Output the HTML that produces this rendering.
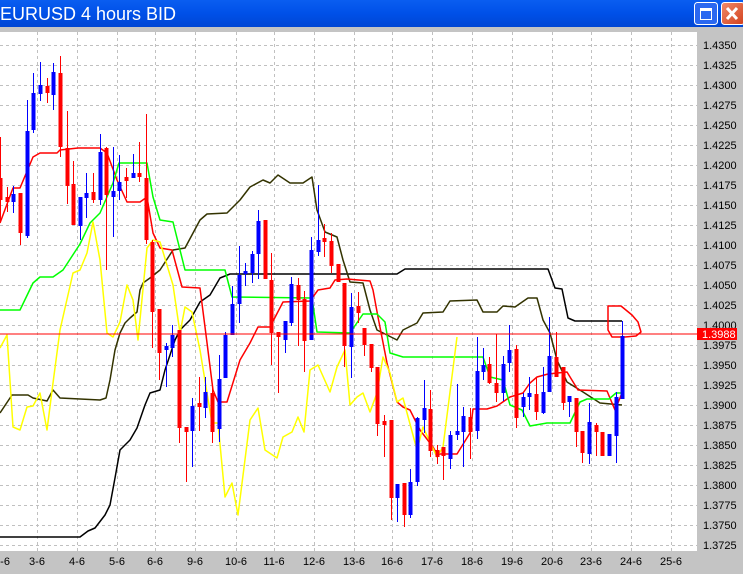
<!DOCTYPE html>
<html><head><meta charset="utf-8"><style>
html,body{margin:0;padding:0;width:743px;height:574px;overflow:hidden;background:#c4c4c4}
svg{display:block}
text{font-family:"Liberation Sans",sans-serif}
</style></head><body>
<svg width="743" height="574" viewBox="0 0 743 574" xmlns="http://www.w3.org/2000/svg">
<defs>
<linearGradient id="tb" x1="0" y1="0" x2="0" y2="1"><stop offset="0" stop-color="#0a5ef0"/><stop offset="0.5" stop-color="#0050e8"/><stop offset="1" stop-color="#0046d4"/></linearGradient>
<linearGradient id="cb" x1="0" y1="0" x2="1" y2="1"><stop offset="0" stop-color="#f08a6a"/><stop offset="1" stop-color="#d2401c"/></linearGradient>
</defs>
<rect x="0" y="0" width="743" height="27" fill="url(#tb)"/>
<text x="0" y="20" font-size="18" fill="#fff">EURUSD 4 hours BID</text>
<rect x="694.5" y="2.5" width="23" height="22" rx="3" fill="#2b68f0" stroke="#fff"/>
<rect x="700.5" y="8.5" width="11" height="11" fill="none" stroke="#fff"/><rect x="700" y="8" width="12" height="3" fill="#fff"/>
<rect x="721.5" y="2.5" width="23" height="22" rx="3" fill="url(#cb)" stroke="#fff"/>
<path d="M727 8 L737 19 M737 8 L727 19" stroke="#fff" stroke-width="3"/>
<rect x="0" y="32" width="697" height="519" fill="#fff"/>
<g stroke="#c0c0c0" stroke-width="1" stroke-dasharray="3,3">
<path d="M0 45.5H697M0 65.5H697M0 85.5H697M0 105.5H697M0 125.5H697M0 145.5H697M0 165.5H697M0 185.5H697M0 205.5H697M0 225.5H697M0 245.5H697M0 265.5H697M0 285.5H697M0 305.5H697M0 325.5H697M0 345.5H697M0 365.5H697M0 385.5H697M0 405.5H697M0 425.5H697M0 445.5H697M0 465.5H697M0 485.5H697M0 505.5H697M0 525.5H697M0 545.5H697"/>
<path d="M37.5 32V551M77.5 32V551M117.5 32V551M155.5 32V551M195.5 32V551M236.5 32V551M274.5 32V551M314.5 32V551M354.5 32V551M392.5 32V551M432.5 32V551M472.5 32V551M512.5 32V551M552.5 32V551M591.5 32V551M631.5 32V551M671.5 32V551"/>
</g>
<g font-size="11" fill="#000">
<text x="703" y="49">1.4350</text><text x="703" y="69">1.4325</text><text x="703" y="89">1.4300</text><text x="703" y="109">1.4275</text><text x="703" y="129">1.4250</text><text x="703" y="149">1.4225</text><text x="703" y="169">1.4200</text><text x="703" y="189">1.4175</text><text x="703" y="209">1.4150</text><text x="703" y="229">1.4125</text><text x="703" y="249">1.4100</text><text x="703" y="269">1.4075</text><text x="703" y="289">1.4050</text><text x="703" y="309">1.4025</text><text x="703" y="329">1.4000</text><text x="703" y="349">1.3975</text><text x="703" y="369">1.3950</text><text x="703" y="389">1.3925</text><text x="703" y="409">1.3900</text><text x="703" y="429">1.3875</text><text x="703" y="449">1.3850</text><text x="703" y="469">1.3825</text><text x="703" y="489">1.3800</text><text x="703" y="509">1.3775</text><text x="703" y="529">1.3750</text><text x="703" y="549">1.3725</text>
</g>
<g font-size="11" fill="#000" text-anchor="middle">
<text x="2" y="565">3-6</text><text x="37" y="565">3-6</text><text x="77" y="565">4-6</text><text x="117" y="565">5-6</text><text x="155" y="565">6-6</text><text x="195" y="565">9-6</text><text x="236" y="565">10-6</text><text x="274" y="565">11-6</text><text x="314" y="565">12-6</text><text x="354" y="565">13-6</text><text x="392" y="565">16-6</text><text x="432" y="565">17-6</text><text x="472" y="565">18-6</text><text x="512" y="565">19-6</text><text x="552" y="565">20-6</text><text x="591" y="565">23-6</text><text x="631" y="565">24-6</text><text x="671" y="565">25-6</text>
</g>
<g fill="none" stroke-width="1.5" stroke-linejoin="round">
<polyline stroke="#000" points="0,537 80,537 88,531 95,528 105,515 110,505 115,478 120,450 130,440 137,428 145,405 150,393 160,390 165,370 170,355 175,340 180,330 190,320 200,302 210,295 220,278 230,274 397,274 405,269 548,269 555,288 562,289 568,318 575,321 622,321"/>
<polyline stroke="#333300" points="0,413 12,395 28,395 33,398 47,401 53,390 60,398 100,400 106,398 110,380 115,350 120,333 125,323 130,318 137,312 140,290 143,283 150,278 160,270 173,250 185,248 200,220 207,214 227,213 240,200 250,187 263,180 270,183 278,175 290,183 303,183 312,177 317,210 325,232 337,237 343,260 350,282 363,283 370,310 377,330 387,335 397,340 403,330 417,323 423,313 443,312 450,301 477,300 483,312 497,312 503,306 515,307 528,298 537,298 543,320 550,333 557,360 567,382 583,392 600,403 622,405"/>
<polyline stroke="#ff0000" points="0,223 13,188 20,188 33,157 40,153 57,153 60,150 78,148 100,148 107,153 117,180 127,202 140,202 147,197 153,233 160,248 172,250 182,287 200,288 205,327 213,390 218,402 227,402 240,360 250,343 258,327 270,327 283,302 310,301 318,290 330,288 335,280 347,279 370,281 373,290 378,317 387,363 397,402 403,407 410,410 420,430 433,447 437,454 457,454 470,433 473,409 487,409 497,406 510,397 523,393 530,383 537,377 548,374 567,372 578,390 607,391 615,410 622,393"/>
<polyline stroke="#00ff00" points="0,310 20,310 33,283 40,277 53,277 63,270 80,244 90,223 100,213 113,183 119,163 147,163 153,197 160,220 173,222 185,270 225,270 232,297 312,298 317,332 350,333 363,314 377,314 385,322 390,353 403,357 483,357 490,377 503,380 510,405 522,410 530,426 547,423 570,423 580,402 587,399 609,399 616,393 622,393"/>
<polyline stroke="#ffff00" points="0,348 7,335 13,427 20,430 27,407 33,406 40,393 47,430 53,383 60,330 73,273 80,270 87,253 93,222 100,260 107,333 113,337 120,322 127,285 133,300 138,340 147,248 153,240 160,242 173,285 180,333 185,307 192,312 200,350 207,393 212,423 218,423 225,497 232,483 238,515 250,420 258,408 265,450 277,458 283,437 292,432 298,417 304,432 310,370 318,365 330,392 337,367 345,350 350,405 357,397 363,393 370,412 377,393 383,357 390,373 397,402 403,398 417,450 423,427 437,457 443,447 457,337"/>
<path stroke="#ff0000" d="M608,306 L621,306 L632,315 L638,322 L641,332 L636,336 L625,337 L612,337 L608,330 Z"/>
</g>
<path stroke="#ff0000" stroke-width="1" fill="none" d="M0.5 137V222M7.5 187V212M20.5 193V245M47.5 78V103M60.5 56V157M67.5 111V204M73.5 161V225M93.5 173V203M106.5 147V270M126.5 168V198M139.5 142V182M146.5 114V244M152.5 240V348M159.5 309V380M179.5 330V443M186.5 427V482M199.5 377V431M212.5 385V443M265.5 220V279M271.5 253V365M278.5 332V393M298.5 278V346M304.5 291V372M324.5 224V257M331.5 233V273M338.5 264V282M344.5 283V367M358.5 292V323M364.5 328V356M371.5 344V372M377.5 367V436M384.5 415V457M391.5 420V520M404.5 483V527M430.5 390V457M437.5 445V464M443.5 447V480M470.5 408V459M489.5 357V384M496.5 334V402M516.5 345V428M536.5 378V420M556.5 332V377M563.5 367V410M576.5 398V447M582.5 431V463M596.5 423V456M602.5 432V456"/>
<path stroke="#ff0000" stroke-width="4" fill="none" d="M0.5 178V200M7.5 197V202M20.5 193V233M47.5 86V93M60.5 73V147M67.5 148V186M73.5 184V225M93.5 192V200M106.5 148V195M126.5 177V181M139.5 173V177M146.5 178V240M152.5 242V312M159.5 309V353M179.5 330V428M186.5 427V432M199.5 403V407M212.5 393V432M265.5 220V279M271.5 280V333M278.5 332V337M298.5 285V300M304.5 299V341M324.5 238V242M331.5 241V266M338.5 264V282M344.5 283V346M358.5 306V313M364.5 328V345M371.5 344V368M377.5 367V424M384.5 421V425M391.5 420V498M404.5 483V515M430.5 409V451M437.5 450V457M443.5 447V456M470.5 417V432M489.5 364V383M496.5 383V393M516.5 349V418M536.5 394V412M556.5 357V377M563.5 367V403M576.5 398V432M582.5 431V453M596.5 425V432M602.5 432V456"/>
<path stroke="#0000ff" stroke-width="1" fill="none" d="M13.5 186V213M27.5 100V238M33.5 73V133M40.5 62V101M53.5 63V110M80.5 197V240M86.5 173V218M100.5 134V205M113.5 147V237M119.5 155V200M133.5 154V178M166.5 343V387M172.5 325V357M192.5 398V467M205.5 377V418M219.5 355V442M225.5 332V378M232.5 286V335M239.5 246V323M245.5 263V286M252.5 251V283M258.5 210V279M285.5 321V353M291.5 277V326M311.5 237V340M318.5 185V256M351.5 293V378M397.5 484V522M410.5 469V518M417.5 417V486M424.5 380V433M450.5 431V469M457.5 384V440M463.5 407V467M477.5 337V439M483.5 348V380M503.5 356V401M509.5 325V372M523.5 393V417M529.5 377V410M543.5 367V414M549.5 317V392M569.5 396V417M589.5 403V464M609.5 434V456M616.5 392V463M622.5 321V399"/>
<path stroke="#0000ff" stroke-width="4" fill="none" d="M13.5 194V202M27.5 131V236M33.5 93V130M40.5 85V94M53.5 72V95M80.5 197V226M86.5 193V198M100.5 152V200M113.5 191V197M119.5 182V191M133.5 173V178M166.5 346V350M172.5 335V348M192.5 406V431M205.5 392V408M219.5 379V429M225.5 335V378M232.5 304V335M239.5 275V304M245.5 271V274M252.5 254V273M258.5 221V254M285.5 321V340M291.5 284V323M311.5 250V340M318.5 240V252M351.5 307V347M397.5 484V498M410.5 482V515M417.5 418V482M424.5 408V420M450.5 435V459M457.5 431V435M463.5 416V432M477.5 371V431M483.5 365V372M503.5 364V393M509.5 350V363M523.5 397V407M529.5 393V397M543.5 392V413M549.5 356V392M569.5 396V402M589.5 422V454M609.5 434V456M616.5 397V436M622.5 336V399"/>
<rect x="0" y="333.5" width="697" height="1" fill="#ff0000"/>
<rect x="697" y="328" width="40" height="12" fill="#ff0000"/>
<text x="702" y="338" font-size="11" fill="#fff">1.3988</text>
</svg>
</body></html>
